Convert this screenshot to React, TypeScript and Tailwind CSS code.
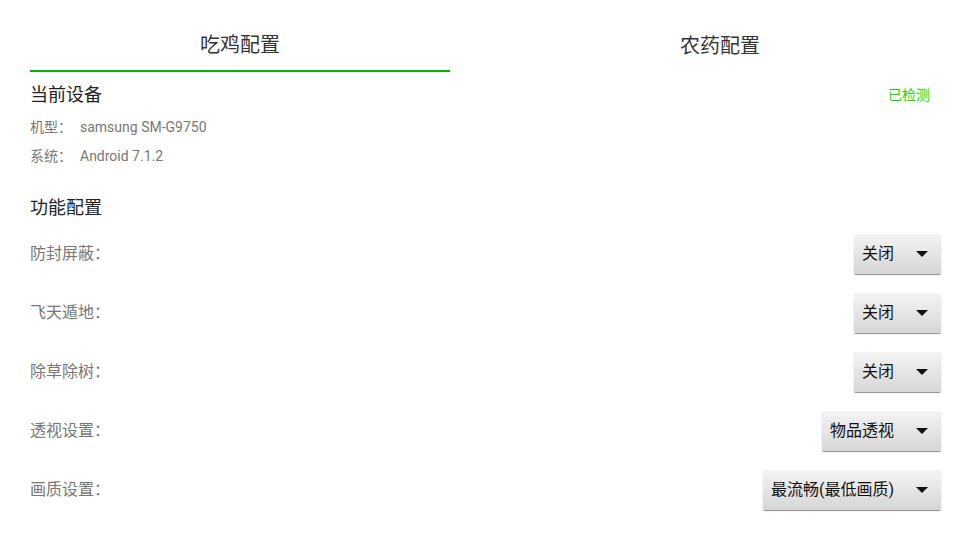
const FONT = { fontFamily: 'Roboto, "Noto Sans CJK SC", sans-serif' };

const TABS = ['吃鸡配置', '农药配置'];

const DEVICE_INFO = [
  { label: '机型：', value: 'samsung SM-G9750' },
  { label: '系统：', value: 'Android 7.1.2' },
];

const OPTIONS = [
  { label: '防封屏蔽：', value: '关闭' },
  { label: '飞天遁地：', value: '关闭' },
  { label: '除草除树：', value: '关闭' },
  { label: '透视设置：', value: '物品透视' },
  { label: '画质设置：', value: '最流畅(最低画质)' },
];

function Spinner({ value }: { value: string }) {
  return (
    <div className="flex h-[40px] items-center rounded-[2px] bg-gradient-to-b from-[#f4f4f4] to-[#d6d6d6] pl-[8px] pr-[13px] shadow-[0_1px_1px_rgba(0,0,0,0.45)]">
      <span className="text-[16px] text-[#111]">{value}</span>
      <svg width="12" height="6" viewBox="0 0 12 6" className="ml-[22px]">
        <path d="M0 0 L12 0 L6 6 Z" fill="#111" />
      </svg>
    </div>
  );
}

export default function App() {
  return (
    <div className="h-[540px] w-[960px] overflow-hidden bg-white" style={FONT}>
      {/* Tabs */}
      <div className="grid grid-cols-2">
        {TABS.map((tab, i) => (
          <div key={tab} className="px-[30px]">
            <div
              className={`flex h-[72px] items-center justify-center pt-[20px] text-[20px] text-[#333] ${
                i === 0 ? 'border-b-2 border-[#00b800]' : ''
              }`}
            >
              {tab}
            </div>
          </div>
        ))}
      </div>

      {/* Current device */}
      <div className="pl-[30px] pr-[30px] pt-[11px]">
        <div className="flex items-center justify-between">
          <span className="text-[18px] leading-[24px] text-[#222]">当前设备</span>
          <span className="text-[14px] text-[#10d810]">已检测</span>
        </div>
        <div className="mt-[10px] flex flex-col gap-[9px]">
          {DEVICE_INFO.map((row) => (
            <div key={row.label} className="flex text-[14px] leading-[20px] text-[#777]">
              <span className="w-[50px]">{row.label}</span>
              <span>{row.value}</span>
            </div>
          ))}
        </div>
      </div>

      {/* Feature config */}
      <div className="pl-[30px] pr-[19px] pt-[30px]">
        <div className="text-[18px] leading-[24px] text-[#222]">功能配置</div>
        <div className="mt-[4px]">
          {OPTIONS.map((opt) => (
            <div key={opt.label} className="flex h-[59px] items-center justify-between">
              <span className="pt-[1px] text-[16px] text-[#777]">{opt.label}</span>
              <Spinner value={opt.value} />
            </div>
          ))}
        </div>
      </div>
    </div>
  );
}
